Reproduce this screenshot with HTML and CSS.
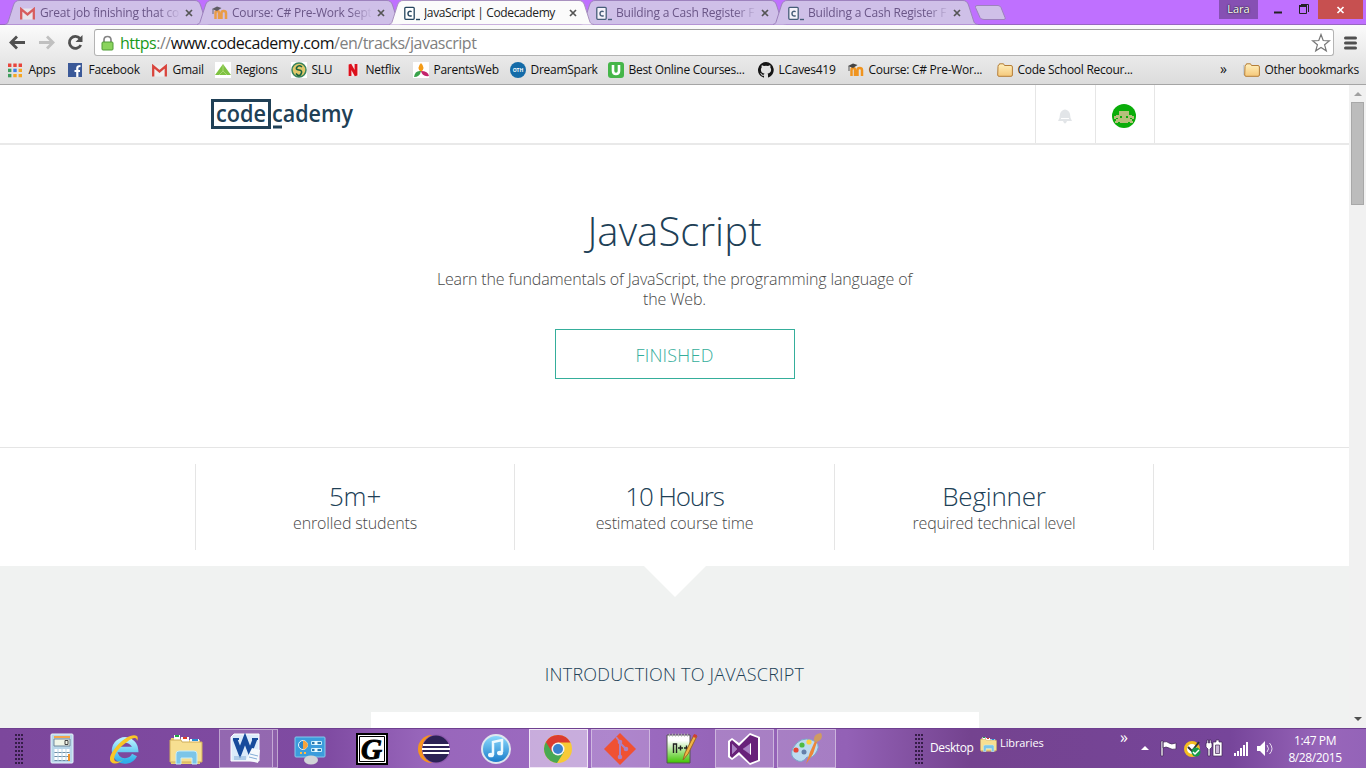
FILE: index.html
```html
<!DOCTYPE html>
<html lang="en">
<head>
<meta charset="utf-8">
<title>JavaScript | Codecademy</title>
<link rel="stylesheet" href="styles.css">
</head>
<body>
<svg class="defs" width="0" height="0">
  <defs>
    <linearGradient id="folder" x2="0" y2="1"><stop stop-color="#fff0bd"/><stop offset="1" stop-color="#f5c87a"/></linearGradient>
    <linearGradient id="blue" x2="0" y2="1"><stop stop-color="#8fdcff"/><stop offset="1" stop-color="#1679c8"/></linearGradient>
    <linearGradient id="ie" x2="0" y2="1"><stop stop-color="#b5f0ff"/><stop offset="1" stop-color="#2fb0ea"/></linearGradient>
    <linearGradient id="npp" x2="0" y2="1"><stop offset=".2" stop-color="#fff"/><stop offset="1" stop-color="#3fc400"/></linearGradient>
    <symbol id="i-tab" viewBox="0 0 206 25"><path d="M0 24.5C3 24 3 22 4 19L8.500 5Q10 .5 14 .5H190Q194 .5 195.500 5L200 19C201 22 201 24 205 24.500"/></symbol>
    <symbol id="i-x" viewBox="0 0 8 8"><path d="M1 1l6 6M7 1L1 7" fill="none" stroke="currentColor" stroke-width="1.700"/></symbol>
    <symbol id="i-gmail" viewBox="0 0 15 12"><path d="M1 1h13v11H1z" fill="#eee"/><path d="M1.200 12V1.700L7.500 7l6.300-5.300V12" fill="none" stroke="#d9453d" stroke-width="2.300"/></symbol>
    <symbol id="i-moodle" viewBox="0 0 16 14"><path d="M3.500 13V7q0-2 1.700-2T7 7v6M9.500 13V7q0-2 2.200-2T14 7v6" fill="none" stroke="#f0941f" stroke-width="2.500"/><path d="M0 3l5-2.500L9.500 2 5 5z" fill="#444"/><path d="M1 3v5" stroke="#555"/></symbol>
    <symbol id="i-cc" viewBox="0 0 17 15"><rect x=".8" y="1.300" width="9.400" height="12" rx="1" fill="#fff" stroke="currentColor" stroke-width="1.300"/><path d="M7.700 5.600Q4 4.500 4 7.600T7.700 9.700" fill="none" stroke="currentColor" stroke-width="1.500"/><path d="M12 13.500h4" stroke="currentColor" stroke-width="1.400"/></symbol>
    <symbol id="i-folder" viewBox="0 0 16 14"><path d="M1 3.500Q1 1.500 2.500 1.500V.8h4l1 1.700H14q1.400 0 1.400 1.500v8q0 1.300-1.400 1.300H2Q.7 13.300.7 12z" fill="url(#folder)" stroke="#b47d37"/></symbol>
    <symbol id="i-explorer" viewBox="0 0 34 32"><path d="M2 5h9l1 2h19v24H2z" fill="#edcf72"/><path d="M5 2h6v6H5z" fill="#fff"/><path d="M6 2h4v2H6z" fill="#1da642"/><path d="M12 4h8v6h-8z" fill="#fff"/><path d="M14 4h4v2h-4z" fill="#df3c26"/><path d="M21 6h9v6h-9z" fill="#fff"/><path d="M23 6h6v2h-6z" fill="#288dd4"/><path d="M1 7h11l1 2h20v20H1z" fill="#f7df91" stroke="#cfae5b"/><path d="M7 31V21q0-3 3-3h15q3 0 3 3v10h-5v-6H12v6z" fill="#7cc5e8" stroke="#c6edfa"/></symbol>
  </defs>
</svg>

<div class="tabs">
  <div class="tab"><svg class="shape"><use href="#i-tab"/></svg><svg class="ico gm"><use href="#i-gmail"/></svg><span class="title t1">Great job finishing that co</span><svg class="close"><use href="#i-x"/></svg></div>
  <div class="tab"><svg class="shape"><use href="#i-tab"/></svg><svg class="ico"><use href="#i-moodle"/></svg><span class="title t2">Course: C# Pre-Work Sept</span><svg class="close"><use href="#i-x"/></svg></div>
  <div class="tab active"><svg class="shape"><use href="#i-tab"/></svg><svg class="ico cc"><use href="#i-cc"/></svg><span class="title t3">JavaScript | Codecademy</span><svg class="close"><use href="#i-x"/></svg></div>
  <div class="tab"><svg class="shape"><use href="#i-tab"/></svg><svg class="ico cc"><use href="#i-cc"/></svg><span class="title t4">Building a Cash Register F</span><svg class="close"><use href="#i-x"/></svg></div>
  <div class="tab"><svg class="shape"><use href="#i-tab"/></svg><svg class="ico cc"><use href="#i-cc"/></svg><span class="title t4">Building a Cash Register F</span><svg class="close"><use href="#i-x"/></svg></div>
  <svg class="newtab" width="32" height="16"><path d="M3 .5h21q2 0 3 2l4 10q1 2-1 2H10q-3 0-4-2L1.500 2.500Q1 .5 3 .5z" fill="#cfc0e8" stroke="#9d82bd"/></svg>
  <div class="winbtns">
    <span class="user">Lara</span>
    <svg width="60" height="19"><path d="M16 12.500h8" stroke="#222" stroke-width="2"/><path d="M41.500 6.500h7v7h-7z" fill="none" stroke="#222"/><path d="M41 6h8" stroke="#222" stroke-width="2"/><path d="M43 4.500h7.500V12" fill="none" stroke="#222"/></svg>
    <span class="winclose"><svg><use href="#i-x"/></svg></span>
  </div>
</div>

<div class="toolbar">
  <svg class="nav" width="86" height="30" viewBox="0 0 86 30"><g fill="none" stroke-width="2.800"><path d="M25 13.500H12M17 7.500l-6 6 6 6" stroke="#505050"/><path d="M39 13.500h13M47 7.500l6 6-6 6" stroke="#c0c0c0"/><path d="M80 9.500a6 6 0 1 0 .8 6.500" stroke="#505050"/></g><path d="M82.500 6v7h-7z" fill="#505050"/></svg>
  <div class="omnibox">
    <svg width="13" height="16"><path d="M3 8V5q0-3.500 3.500-3.500T10 5v3" fill="none" stroke="#858585" stroke-width="1.700"/><rect x="1" y="7" width="11" height="8" rx="1" fill="#8bd45e" stroke="#4e9c37"/></svg>
    <span class="url"><span class="secure">https</span>://<b>www.codecademy.com</b>/en/tracks/javascript</span>
    <svg class="star" width="20" height="20"><path d="M10 1.500l2.200 6 6.300.3-4.900 4 1.700 6L10 14.400l-5.300 3.400 1.700-6-4.900-4 6.300-.3z" fill="#fff" stroke="#777" stroke-width="1.200"/></svg>
  </div>
  <svg width="13" height="14"><path d="M1.500 2h10M1.500 7h10M1.500 12h10" stroke="#505050" stroke-width="3" stroke-linecap="round"/></svg>
</div>

<div class="bookmarks">
  <span><svg class="ico" viewBox="0 0 16 16"><g stroke-width="3.400" stroke-dasharray="3.400 1.900"><path d="M0 3.200h14" stroke="#e8453c"/><path d="M0 8.400h3.400" stroke="#3f9d5d"/><path d="M5.300 8.400h3.400" stroke="#3f7de8"/><path d="M10.600 8.400H14M5.300 13.600H14" stroke="#f5a623"/><path d="M0 13.600h3.400" stroke="#3f9d5d"/></g></svg>Apps</span>
  <span><svg class="ico" viewBox="0 0 16 16"><path d="M0 1h14v14H0z" fill="#3b5998"/><path d="M9.300 15V6q0-2 3.200-2M6.500 9H12" fill="none" stroke="#fff" stroke-width="2.200"/></svg>Facebook</span>
  <span><svg class="ico gm"><use href="#i-gmail"/></svg>Gmail</span>
  <span><svg class="ico" viewBox="0 0 16 16"><path d="M0 0h16v16H0z" fill="#fff"/><path d="M0 13L8 2l8 11z" fill="#7fc242"/><path d="M4 13l4-4 4 4M8 3v6" fill="none" stroke="#a9d873"/></svg>Regions</span>
  <span><svg class="ico" viewBox="0 0 16 16"><path d="M0 0h16v16H0z" fill="#fff"/><circle cx="8" cy="8" r="7" fill="#e1c86a" stroke="#39845b" stroke-width="1.500"/><path d="M11 5Q8 2.500 6 5t2 3 2 4-5-.5" fill="none" stroke="#17643f" stroke-width="1.600"/></svg>SLU</span>
  <span><svg class="ico" viewBox="0 0 16 16"><path d="M3 2h11v12H3z" fill="#f3e9e9"/><path d="M5 14V2.500l6 11V2" fill="none" stroke="#dc101c" stroke-width="2.800"/></svg>Netflix</span>
  <span><svg class="ico" viewBox="0 0 16 16"><path d="M0 0h16v16H0z" fill="#fff"/><path d="M8 1q5 5 0 9-5-4 0-9" fill="#f49c18"/><path d="M8 9q-6-1-7 6 6 0 7-6" fill="#38a24a"/><path d="M8 9q7 0 8 5-7 1-8-5" fill="#c4236b"/></svg>ParentsWeb</span>
  <span><svg class="ico" viewBox="0 0 16 16"><circle cx="8" cy="8" r="8" fill="#146ba8"/><text x="8" y="10" class="oth">OTH</text></svg>DreamSpark</span>
  <span><svg class="ico" viewBox="0 0 16 16"><rect width="16" height="16" rx="3" fill="#45b649"/><path d="M5 3v6q0 3 3 3t3-3V3" fill="none" stroke="#fff" stroke-width="2.600"/></svg>Best Online Courses...</span>
  <span><svg class="ico" viewBox="0 0 16 16"><path d="M8 0a8 8 0 0 0-2.500 15.600c.4 0 .5-.2.500-.4v-1.500c-2.200.5-2.700-1-2.700-1-.4-.9-.9-1.200-.9-1.200-.7-.5 0-.5 0-.5.800 0 1.300.9 1.300.9.700 1.200 1.900.9 2.300.7 0-.5.300-.9.500-1.100-1.800-.2-3.600-.9-3.600-4 0-.8.300-1.600.8-2.100 0-.2-.3-1 .1-2.100 0 0 .7-.2 2.200.8a7.600 7.600 0 0 1 4 0c1.500-1 2.200-.8 2.200-.8.400 1.100.1 1.900.1 2.100.5.500.8 1.300.8 2.100 0 3.100-1.900 3.800-3.600 4 .3.200.5.700.5 1.500v2.100c0 .2.100.5.500.4A8 8 0 0 0 8 0z" fill="#161616"/></svg>LCaves419</span>
  <span><svg class="ico"><use href="#i-moodle"/></svg>Course: C# Pre-Wor...</span>
  <span><svg class="ico"><use href="#i-folder"/></svg>Code School Recour...</span>
  <span class="more">»</span>
  <span class="other"><svg class="ico"><use href="#i-folder"/></svg>Other bookmarks</span>
</div>

<div class="viewport">
  <main>
    <header>
      <svg class="logo" width="160" height="34"><path d="M1.500 2.500h57v27h-57z" fill="none" stroke="#204056" stroke-width="3"/><text x="5" y="24" textLength="50" lengthAdjust="spacingAndGlyphs">code</text><text x="61" y="24" textLength="81" lengthAdjust="spacingAndGlyphs">cademy</text><path d="M62 29h9" stroke="#204056" stroke-width="3"/></svg>
      <div class="cell"><svg width="16" height="18"><path d="M1 14q2-3 2-7 1-4 5-4.500Q12 3 13 7q0 4 2 7z" fill="#e2e5e8"/><path d="M6 14q2 5 4 0" fill="#e2e5e8"/><path d="M4 11.500h8" stroke="#fff"/></svg></div>
      <div class="cell last"><svg width="24" height="24"><circle cx="12" cy="12" r="12" fill="#0aad0a"/><path d="M7 7h10v4h3v1h2v3h-2v2h1v2h-3v-1h-2v1H8v-1H6v1H3v-2h1v-2H2v-3h2v-1h3z" fill="#b5bf7c"/><path d="M8 12h2v2H8zM14 12h2v2h-2zM4 14h2v1H4zM18 14h2v1h-2z" fill="#0aad0a"/></svg></div>
    </header>
    <section class="hero">
      <h1>JavaScript</h1>
      <p>Learn the fundamentals of JavaScript, the programming language of<br>the Web.</p>
      <a class="btn">FINISHED</a>
    </section>
    <section class="stats">
      <div><strong class="s1">5m+</strong><span class="d1">enrolled students</span></div>
      <div><strong class="s2">10 Hours</strong><span class="d2">estimated course time</span></div>
      <div><strong class="s3">Beginner</strong><span class="d3">required technical level</span></div>
    </section>
    <section class="course">
      <svg width="62" height="31"><path d="M0 0h62L31 31z" fill="#fff"/></svg>
      <h2>INTRODUCTION TO JAVASCRIPT</h2>
      <div class="card"></div>
    </section>
  </main>
  <aside class="scroll"><svg width="17" height="17"><path d="M5 11l4-4 4 4z" fill="#a0a0a0"/></svg><i></i><svg width="17" height="17"><path d="M5 6l4 4 4-4z" fill="#505050"/></svg></aside>
</div>

<footer class="taskbar">
  <div class="grip"></div>
  <div class="apps">
    <span><svg width="32" height="32"><rect x="5" y="1" width="22" height="29" rx="1" fill="#b8d6e9" stroke="#e7f5fc"/><path d="M8 3h16v2H8z" fill="#f2a64c"/><path d="M8 6h16v7H8z" fill="#f0f6e8" stroke="#71899b"/><path d="M19 7.500h3v4h-3z" fill="none" stroke="#444"/><path d="M8.500 17.500h15M8.500 21.500h15M8.500 25.500h15" stroke="#fff" stroke-width="3" stroke-dasharray="3 1"/><path d="M8.500 19.500h15M8.500 23.500h15M8.500 27.500h15" stroke="#6f8da3" stroke-width="1" stroke-dasharray="3 1"/><path d="M22 21h2v7h-2z" fill="#ef922c"/></svg></span>
    <span><svg width="32" height="32"><path d="M26.500 22A10.500 10.500 0 1 1 27.500 16.500H9" fill="none" stroke="url(#ie)" stroke-width="5.500"/><path d="M3 29C-3 23 19-2 29 3c1 1 1 3 0 5 0-5-5-3-10 1C10 15 4 24 7 28q3 2 8-1-8 6-12 2z" fill="#f9c626"/></svg></span>
    <span><svg width="34" height="32"><use href="#i-explorer"/></svg></span>
    <span class="word"><svg width="32" height="32"><path d="M4 1h25v27H1V4z" fill="#dcebfa" stroke="#fff"/><path d="M5 6l5 13 5-13 5 13 5-13" fill="none" stroke="#174b9c" stroke-width="4.600"/><path d="M3 6h6M13 6h4M22 6h6" stroke="#174b9c" stroke-width="2"/><path d="M22 15l8 2-2 13-12-3z" fill="#f5f9fd"/><path d="M20 21l8 2M19 24l8 2M4 24h12M4 26h12" stroke="#84add7"/></svg></span>
    <span><svg width="32" height="32"><rect x="1" y="4" width="30" height="20" rx="1" fill="#3b9cdc" stroke="#86caed"/><circle cx="9" cy="12" r="4.500" fill="#2b86cc" stroke="#e7f5ff"/><path d="M9 12V7.500q4 .5 5 4.500-1 4-5 4.500z" fill="#f6a33b"/><path d="M17.500 8.500h10v3h-10zM17.500 15.500h10v3h-10z" fill="#2877ad" stroke="#c8eefb"/><path d="M22 8v4M22 15v4" stroke="#e8faff" stroke-width="3"/><path d="M6 20h8" stroke="#ffbb43" stroke-width="2" stroke-dasharray="2"/><ellipse cx="17" cy="27" rx="7" ry="4.500" fill="#d1d4d8"/></svg></span>
    <span><svg width="32" height="32"><path d="M1 1h30v30H1z" fill="#fff" stroke="#000" stroke-width="2"/><path d="M3.500 3.500h25v25h-25z" fill="none" stroke="#000"/><text x="5" y="26" class="g">G</text></svg></span>
    <span><svg width="32" height="32"><circle cx="14" cy="16" r="14" fill="#f7941e"/><circle cx="18.500" cy="16" r="14.500" fill="#8d5aae"/><circle cx="18" cy="16" r="13.500" fill="#2c2255"/><path d="M5 12h26M4 16h28M5 20h26" stroke="#fff" stroke-width="2"/></svg></span>
    <span><svg width="32" height="32"><circle cx="16" cy="16" r="14" fill="url(#blue)" stroke="#dfe7ee" stroke-width="2"/><path d="M13 22V9l9-2v12" fill="none" stroke="#eefaff" stroke-width="2.500"/><ellipse cx="11" cy="22" rx="3" ry="2.300" fill="#eefaff"/><ellipse cx="20" cy="20" rx="3" ry="2.300" fill="#eefaff"/></svg></span>
    <span class="open front"><svg width="32" height="32"><circle cx="16" cy="16" r="14" fill="#f7ca37"/><path d="M16 16L3.900 9A14 14 0 0 0 15 30l7-11z" fill="#48a852"/><path d="M10 19L3.900 9A14 14 0 0 1 28.500 9.500H16z" fill="#dc3b2f"/><circle cx="16" cy="16" r="6.500" fill="#f5f5f5"/><circle cx="16" cy="16" r="5" fill="#3b82cd"/></svg></span>
    <span class="open"><svg width="32" height="32"><path d="M16 0l16 16-16 16L0 16z" fill="#f05133"/><path d="M12 4l4 5v14M16 10l6 6" fill="none" stroke="#a981c4" stroke-width="2"/><circle cx="16" cy="9" r="2.300" fill="#a981c4"/><circle cx="16" cy="24" r="2.300" fill="#a981c4"/><circle cx="22" cy="16" r="2.300" fill="#a981c4"/></svg></span>
    <span><svg width="32" height="32"><path d="M1 2h23v28H1z" fill="url(#npp)" stroke="#555"/><path d="M3 2h20" stroke="#aaa" stroke-width="3" stroke-dasharray="1 2"/><path d="M7.500 20v-9h3v9M12 15h5M14.500 12.500v5M18 15h5M20.500 12.500v5" fill="none" stroke="#222" stroke-width="1.400"/><path d="M17 27l2-7L28 2l3 1-9 18z" fill="#f2b544" stroke="#9b6625"/><path d="M28 1l3 1-1 3-3-1z" fill="#d23c35"/></svg></span>
    <span class="open"><svg width="32" height="32"><path d="M22 0l10 4v24l-10 4-11-10-7 5-4-3V8l4-3 7 5zM4 11v10l5-5zM22 10l-7 6 7 6z" fill="#fff" fill-rule="evenodd"/><path d="M22 2l8 3v22l-8 3L11 19l-7 6-2-2V9l2-2 7 6zM4 11v10l5-5zM23 10l-8 6 8 6z" fill="#68217a" fill-rule="evenodd"/></svg></span>
    <span class="open"><svg width="32" height="32"><path d="M3 15Q10 3 22 7q9 3 5 11t-10 6q-5 7-11 3Q-1 23 3 15z" fill="#bddcf0" stroke="#7aa8cb"/><circle cx="12" cy="12" r="2.600" fill="#4fba42"/><circle cx="6" cy="17" r="2.600" fill="#e64536"/><circle cx="19" cy="9" r="2.600" fill="#ffd043"/><circle cx="14" cy="19" r="2.500" fill="#6480aa"/><path d="M16 31l4-12 5-11 2 1-4 12z" fill="#ec8739"/><path d="M24 8q-1-7 7-8 3 6-4 9z" fill="#cf9b62"/></svg></span>
  </div>
  <div class="grip second"></div>
  <span class="desk">Desktop</span>
  <svg class="lib" width="17" height="16"><use href="#i-explorer"/></svg>
  <span class="libt">Libraries</span>
  <span class="chev">»</span>
  <svg class="tray" width="136" height="24" viewBox="0 0 136 24"><path d="M1 13l4-4 4 4z" fill="#fff"/><g stroke="#412653" stroke-width=".7" fill="#fff"><path d="M21 4h2v15h-2zM23 5q4-1 6 1t7 0v6q-4 1-7-1t-6 0z"/><path d="M82 5v14h-9V5h3V3h3v2z"/><path d="M75.500 8h4v8.500h-4z" fill="#c9b4d6"/><path d="M67 3v3h-1v4l2 2v7h2v-7l2-2V6h-1V3h-1.500v3h-1V3z"/></g><g fill="#fff"><path d="M94 16h2v3h-2zM97 14h2v5h-2zM100 11h2v8h-2zM103 8h2v11h-2zM106 5h2v14h-2z"/><path d="M117 9h3l5-5v15l-5-5h-3z"/></g><circle cx="52" cy="12" r="6.500" fill="#fff" stroke="#f5bd20" stroke-width="3"/><path d="M48 10l4 4 7-9" fill="none" stroke="#333" stroke-width="2"/><circle cx="56" cy="15" r="4.500" fill="#169b48"/><path d="M53 15l2 2 4-4" fill="none" stroke="#fff" stroke-width="1.500"/><path d="M127 8q3 4 0 7M129.500 6q5 6 0 11" fill="none" stroke="#e9ddf1"/></svg>
  <div class="clock"><span>1:47 PM</span><span>8/28/2015</span></div>
</footer>
</body>
</html>
```
FILE: styles.css
```css
* { box-sizing: border-box; }
body { margin: 0; width: 1366px; height: 768px; overflow: hidden; display: flex; flex-direction: column; background: #fff; font: 12px/16px "Open Sans", sans-serif; color: #111; }
.defs { position: absolute; }
svg { flex: none; display: block; }
.ico { width: 16px; height: 16px; }
.ico.gm { width: 15px; height: 13px; }
.ico.cc { width: 17px; height: 15px; color: #25455d; }

.tabs { height: 25px; flex: none; display: flex; padding-left: 5px; background: #bf70ff; border-bottom: 1px solid #9866c1; }
.tab { position: relative; width: 192px; height: 25px; flex: none; display: flex; align-items: center; padding: 1px 3px 0 15px; color: #6a5687; }
.tab > * { position: relative; }
.tab .shape { position: absolute; left: 0; top: 0; width: 206px; height: 25px; fill: #cfc0e8; stroke: #9d82bd; }
.tab.active { z-index: 2; color: #222; }
.tab.active .shape { fill: #fbfbfb; stroke: #a992bf; }
.tab:not(.active) .ico { opacity: .8; }
.title { margin-left: 4px; width: 139px; flex: none; white-space: nowrap; overflow: hidden; letter-spacing: -.2px; }
.title.t3 { letter-spacing: -.38px; }
.gm + .title { margin-left: 5px; }
.cc + .title { margin-left: 3px; }
.tab:not(.active) .title { -webkit-mask-image: linear-gradient(90deg, #000 118px, transparent 141px); }
.close { width: 8px; height: 8px; margin-left: 6px; color: #555; }
.newtab { margin: 5px 0 0 9px; }
.winbtns { margin-left: auto; display: flex; height: 19px; }
.user { width: 39px; background: #8650b3; color: #fff; text-align: center; font-size: 11px; line-height: 18px; text-shadow: 0 0 2px #222, 0 0 1px #222; }
.winclose { width: 45px; margin-right: 3px; background: #c75050; color: #fff; display: grid; place-items: center; }
.winclose svg { width: 9px; height: 8px; }

.toolbar { height: 33px; flex: none; display: flex; align-items: flex-start; background: linear-gradient(#fbfbfb, #e9e9e9); padding-top: 4px; }
.nav { margin-right: 8px; }
.toolbar > svg:last-child { margin: 7px 0 0 10px; }
.omnibox { width: 1240px; height: 27px; flex: none; border: 1px solid #b4b4b4; border-top-color: #9e9e9e; border-radius: 3px; background: #fff; display: flex; align-items: center; padding: 0 2px 0 6px; }
.url { margin-left: 6px; font: 16px/24px "Open Sans", sans-serif; letter-spacing: -.48px; color: #808080; }
.url b { font-weight: 400; color: #111; }
.secure { color: #1a991a; }
.star { margin-left: auto; }

.bookmarks { height: 27px; flex: none; display: grid; grid-template-columns: 60px 84px 63px 76px 54px 68px 97px 98px 150px 90px 149px 223px 24px 1fr; padding-left: 8px; background: linear-gradient(#e9e9e9, #dcdcdc); border-bottom: 1px solid #a5a5a5; letter-spacing: -.28px; white-space: nowrap; }
.bookmarks span { display: flex; align-items: center; gap: 4.5px; height: 24px; }
.bookmarks .gm { margin-right: 1px; }
.bookmarks .more { font-size: 14px; padding-bottom: 2px; }
.other { box-shadow: -8px 0 0 -7px #c3ced8; }
.oth { font: bold 5px "Open Sans", sans-serif; fill: #fff; text-anchor: middle; letter-spacing: 0; }

.viewport { height: 643px; flex: none; display: flex; }
main { width: 1349px; display: flex; flex-direction: column; font-weight: 300; color: #484848; text-align: center; }
header { height: 60px; flex: none; display: flex; padding: 0 194px 0 211px; border-bottom: 2px solid #e9e9e9; }
.logo { margin: 13px auto 0 0; }
.logo text { font: 600 24px "Open Sans", sans-serif; fill: #204056; }
.cell { width: 60px; border-left: 1px solid #e6e6e6; display: grid; place-items: center; padding: 3px 1px 0 0; }
.cell.last { border-right: 1px solid #e6e6e6; padding-right: 2px; }
.hero { height: 303px; flex: none; display: flex; flex-direction: column; align-items: center; border-bottom: 1px solid #e5e5e5; }
h1 { margin: 61px 0 1px; font-weight: 300; font-size: 40px; line-height: 50px; color: #204056; letter-spacing: .1px; }
.hero p { margin: 12px 0 0; font-size: 16px; line-height: 20px; letter-spacing: -.14px; }
.btn { margin-top: 20px; width: 240px; height: 50px; border: 1px solid #35ae9b; color: #35ae9b; font-size: 18px; line-height: 51px; letter-spacing: .2px; }
.stats { height: 118px; flex: none; display: grid; grid-template-columns: 319px 320px 320px; padding: 16px 0 16px 195px; }
.stats div { border-left: 1px solid #e5e5e5; display: flex; flex-direction: column; padding-top: 17px; }
.stats div:last-child { border-right: 1px solid #e5e5e5; }
.stats strong { font-size: 26px; line-height: 30px; margin-bottom: 1px; font-weight: 300; color: #204056; letter-spacing: -.2px; }
.stats strong.s2 { letter-spacing: -1.2px; }
.stats span { font-size: 16px; line-height: 22px; letter-spacing: -.14px; }
.course { height: 162px; background: #f0f2f1; display: flex; flex-direction: column; align-items: center; overflow: hidden; }
h2 { margin: 65px 0 26px; font-weight: 300; font-size: 18px; line-height: 24px; color: #204056; letter-spacing: .2px; }
.card { width: 608px; height: 16px; background: #fff; }
.scroll { width: 17px; background: #f1f1f1; display: flex; flex-direction: column; }
.scroll i { width: 13px; height: 103px; margin-left: 2px; background: #bcbcbc; border: 1px solid #a8a8a8; }
.scroll svg:last-child { margin-top: auto; }

.taskbar { height: 40px; flex: none; display: flex; align-items: center; color: #fff; background: linear-gradient(90deg, #7c479c, #7f4ba2 24%, #9866bb 31%, #9d6cc2 45%, #9665b9 52%, #9361b6 62%, #74438f 71%, #76459a 90%, #9866ba 97%, #9463b8); border-top: 1px solid #6f4090; white-space: nowrap; }
.grip { width: 9px; height: 30px; margin: 0 7px 0 15px; background: radial-gradient(circle at 1px 1px, #351d48 1px, transparent 1.200px) 0 0 / 3px 4px; }
.grip.second { margin: 0 6px 0 78px; }
.apps { height: 39px; display: grid; grid-template-columns: repeat(13, 62px); align-items: center; justify-items: center; }
.apps > span { width: 59px; height: 39px; display: grid; place-items: center; }
.apps .open { background: rgba(255,255,255,.18); border: 1px solid rgba(255,255,255,.42); }
.apps .front { background: rgba(255,255,255,.45); border-color: #f0e6f5; }
.apps .word { background: rgba(255,255,255,.17); border: 1px solid rgba(255,255,255,.4); box-shadow: inset -4px 0 #8e60ab, inset -5px 0 #c5a8d6; padding-right: 5px; }
.g { font: italic bold 29px "Liberation Serif", serif; stroke: #000; }
.desk { width: 50px; letter-spacing: -.4px; line-height: 14px; margin-top: -2px; }
.lib { margin-top: -10px; }
.libt { margin: -11px 0 0 3px; width: 120px; font-size: 11px; letter-spacing: -.1px; }
.chev { width: 20px; font-size: 16px; margin-top: -24px; }
.tray { margin-top: 1px; }
.clock { width: 60px; margin-left: 9px; display: flex; flex-direction: column; text-align: center; line-height: 17px; letter-spacing: -.4px; }
```
